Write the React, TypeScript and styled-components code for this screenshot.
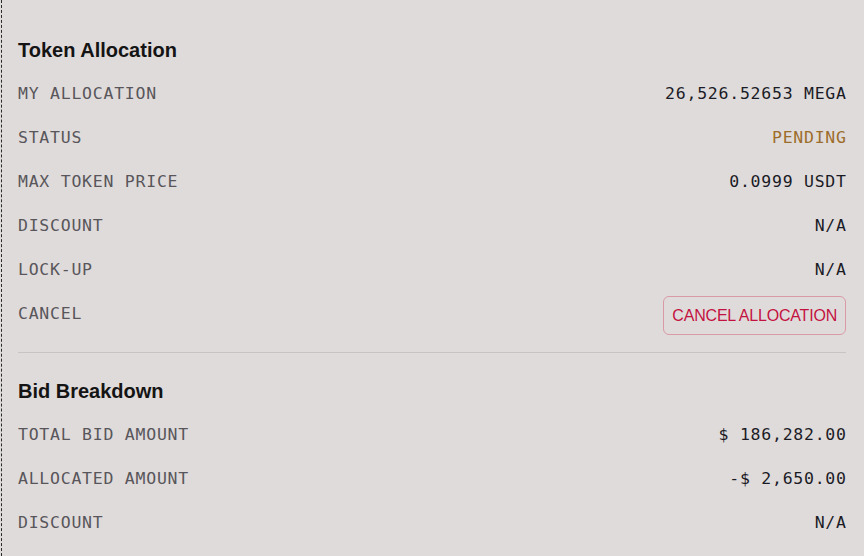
import styled, { createGlobalStyle } from 'styled-components';

const GlobalStyle = createGlobalStyle`
  html, body {
    margin: 0;
    padding: 0;
    background: #e0dbdb;
  }
  body {
    font-family: 'Liberation Sans', Arial, sans-serif;
  }
`;

type Tone = 'default' | 'pending';

interface Item {
  label: string;
  value?: string;
  tone?: Tone;
  action?: string;
}

const allocation: Item[] = [
  { label: 'My Allocation', value: '26,526.52653 MEGA' },
  { label: 'Status', value: 'PENDING', tone: 'pending' },
  { label: 'Max Token Price', value: '0.0999 USDT' },
  { label: 'Discount', value: 'N/A' },
  { label: 'Lock-up', value: 'N/A' },
  { label: 'Cancel', action: 'Cancel Allocation' },
];

const breakdown: Item[] = [
  { label: 'Total Bid Amount', value: '$ 186,282.00' },
  { label: 'Allocated Amount', value: '-$ 2,650.00' },
  { label: 'Discount', value: 'N/A' },
];

const Section = ({ title, items }: { title: string; items: Item[] }) => (
  <SectionBox>
    <Title>{title}</Title>
    {items.map((item) => (
      <Row key={item.label}>
        <Label>{item.label}</Label>
        {item.action ? (
          <CancelBtn>{item.action}</CancelBtn>
        ) : (
          <Value $tone={item.tone ?? 'default'}>{item.value}</Value>
        )}
      </Row>
    ))}
  </SectionBox>
);

const App = () => {
  return (
    <>
      <GlobalStyle />
      <Panel>
        <Section title="Token Allocation" items={allocation} />
        <Section title="Bid Breakdown" items={breakdown} />
      </Panel>
    </>
  );
};

export default App;

const Panel = styled.div`
  min-height: 556px;
  box-sizing: border-box;
  margin-left: 1px;
  border-left: 1px dashed #2a2a2a;
  padding: 12px 18px 0 16px;
`;

const SectionBox = styled.section`
  padding: 26px 0 17px;

  & + & {
    border-top: 1px solid #c9c4c4;
  }
`;

const Title = styled.h2`
  margin: 0 0 9px;
  font-family: 'Liberation Sans', Arial, sans-serif;
  font-size: 20px;
  line-height: 24px;
  font-weight: 700;
  color: #141414;
`;

const Row = styled.div`
  height: 44px;
  display: flex;
  align-items: center;
  justify-content: space-between;
`;

const Label = styled.span`
  padding-top: 2px;
  font-family: 'DejaVu Sans Mono', 'Liberation Mono', monospace;
  font-size: 16.5px;
  line-height: 24px;
  letter-spacing: 0.75px;
  text-transform: uppercase;
  color: #58565a;
`;

const Value = styled(Label)<{ $tone: Tone }>`
  margin-right: -0.75px;
  color: ${({ $tone }) => ($tone === 'pending' ? '#9c6d2a' : '#1b1b26')};
`;

const CancelBtn = styled.button`
  height: 39px;
  margin-top: 5px;
  padding: 0 8px;
  border: 1px solid #d99aa6;
  border-radius: 6px;
  background: transparent;
  font-family: 'Liberation Sans', Arial, sans-serif;
  font-size: 16px;
  letter-spacing: -0.2px;
  text-transform: uppercase;
  color: #c3123f;
  cursor: pointer;
`;
